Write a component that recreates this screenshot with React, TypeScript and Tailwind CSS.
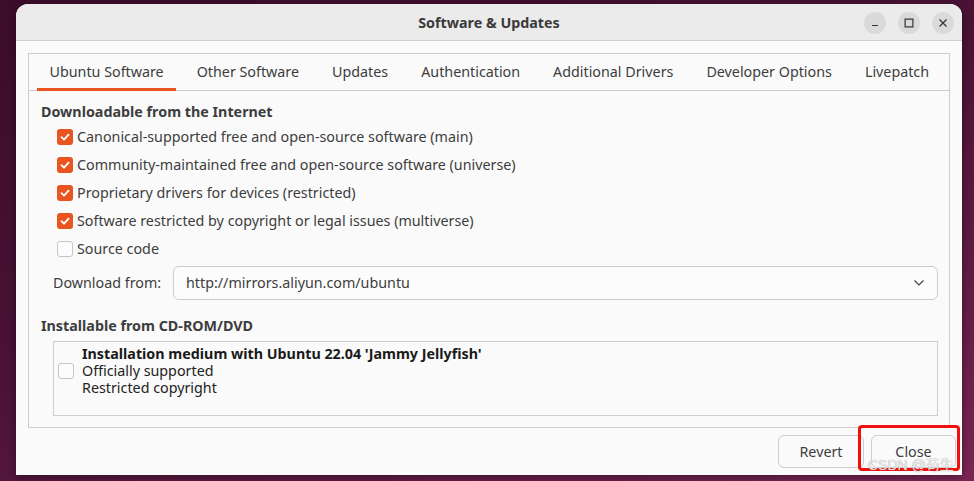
import React from "react";

const font = { fontFamily: '"Noto Sans", "Open Sans", sans-serif' };

function Check({ checked }: { checked: boolean }) {
  if (checked) {
    return (
      <div className="w-[16px] h-[16px] rounded-[3px] bg-[#e95420] flex items-center justify-center shrink-0">
        <svg width="12" height="12" viewBox="0 0 12 12">
          <path d="M2.5 6.2 L5 8.6 L9.6 3.6" stroke="white" strokeWidth="1.8" fill="none" strokeLinecap="round" strokeLinejoin="round" />
        </svg>
      </div>
    );
  }
  return <div className="w-[16px] h-[16px] rounded-[3px] border border-[#c6c6c6] bg-[#fcfcfc] shrink-0" />;
}

const tabs = [
  "Ubuntu Software",
  "Other Software",
  "Updates",
  "Authentication",
  "Additional Drivers",
  "Developer Options",
  "Livepatch",
];

const rows: [string, boolean][] = [
  ["Canonical-supported free and open-source software (main)", true],
  ["Community-maintained free and open-source software (universe)", true],
  ["Proprietary drivers for devices (restricted)", true],
  ["Software restricted by copyright or legal issues (multiverse)", true],
  ["Source code", false],
];

export default function App() {
  return (
    <div
      className="relative w-[974px] h-[481px] overflow-hidden bg-[linear-gradient(160deg,#3b0c2b_0%,#4a1236_45%,#5c1a42_70%,#7a2654_100%)] pt-[4px] pl-[16px] text-[#3d3d3d]"
      style={font}
    >
      <div className="w-[946px] h-[471px] rounded-t-[12px] bg-[#fafafa] flex flex-col overflow-hidden shadow-[0_2px_8px_rgba(0,0,0,0.4)]">
        {/* Header bar */}
        <div className="h-[37px] bg-[#ebebeb] border-b border-[#cfcfcf] grid grid-cols-[1fr_auto_1fr] items-center shrink-0">
          <div />
          <div className="text-[14.3px] font-bold text-[#3a3a3a] pt-[1px]">Software &amp; Updates</div>
          <div className="flex justify-end items-center gap-[12px] pr-[8px] pt-[2px]">
            <div className="w-[22px] h-[22px] rounded-full bg-[#dadada] flex items-center justify-center">
              <svg width="10" height="10" viewBox="0 0 10 10">
                <path d="M2 7.5 H8" stroke="#333" strokeWidth="1.2" />
              </svg>
            </div>
            <div className="w-[22px] h-[22px] rounded-full bg-[#dadada] flex items-center justify-center">
              <svg width="10" height="10" viewBox="0 0 10 10">
                <rect x="1.1" y="1.1" width="7.8" height="7.8" stroke="#333" strokeWidth="1.2" fill="none" />
              </svg>
            </div>
            <div className="w-[22px] h-[22px] rounded-full bg-[#dadada] flex items-center justify-center">
              <svg width="10" height="10" viewBox="0 0 10 10">
                <path d="M1.5 1.5 L8.5 8.5 M8.5 1.5 L1.5 8.5" stroke="#333" strokeWidth="1.2" />
              </svg>
            </div>
          </div>
        </div>

        {/* Body */}
        <div className="px-[12px] pt-[12px] flex flex-col">
          <div className="h-[375px] border border-[#cdcdcd] bg-[#fafafa] flex flex-col">
            {/* Tabs */}
            <div className="h-[37px] border-b border-[#cdcdcd] flex items-stretch pl-[4px] shrink-0">
              {tabs.map((t, i) => (
                <div
                  key={t}
                  className={
                    "mx-[4px] px-[12.5px] flex items-center text-[14.3px] border-b-[3px] mb-[-1px] " +
                    (i === 0 ? "border-[#e95420]" : "border-transparent")
                  }
                >
                  <span className="pt-[2px]">{t}</span>
                </div>
              ))}
            </div>

            {/* Content */}
            <div className="flex flex-col pl-[12px] pr-[11px] pt-[11px]">
              <div className="h-[20px] leading-[20px] font-bold text-[14.3px]">Downloadable from the Internet</div>
              <div className="flex flex-col pl-[16px] mt-[1px]">
                {rows.map(([label, c]) => (
                  <div key={label} className="h-[28px] flex items-center gap-[4px]">
                    <Check checked={c} />
                    <span className="text-[14.3px]">{label}</span>
                  </div>
                ))}
              </div>
              <div className="mt-[3px] pl-[12px] flex items-center h-[34px]">
                <div className="w-[120px] text-[14.3px]">Download from:</div>
                <div className="flex-1 h-[34px] rounded-[6px] border border-[#cdcdcd] bg-[#fcfcfc] flex items-center justify-between pl-[12px] pr-[12px]">
                  <span className="text-[14.3px]">http://mirrors.aliyun.com/ubuntu</span>
                  <svg width="12" height="8" viewBox="0 0 12 8">
                    <path d="M1.5 1.5 L6 6 L10.5 1.5" stroke="#444" strokeWidth="1.2" fill="none" />
                  </svg>
                </div>
              </div>
              <div className="mt-[16px] h-[20px] leading-[20px] font-bold text-[14.3px]">Installable from CD-ROM/DVD</div>
              <div className="mt-[5px] ml-[12px] h-[75px] border border-[#cdcdcd] bg-[#fafafa] flex items-start pl-[4px] pt-[3px]">
                <div className="flex items-center gap-[8px]">
                  <Check checked={false} />
                  <div className="flex flex-col text-[14.3px] leading-[17px]">
                    <span className="font-bold text-[#1a1a1a]">Installation medium with Ubuntu 22.04 'Jammy Jellyfish'</span>
                    <span className="text-[#222]">Officially supported</span>
                    <span className="text-[#222]">Restricted copyright</span>
                  </div>
                </div>
              </div>
            </div>
          </div>

          {/* Actions */}
          <div className="mt-[7px] flex justify-end gap-[7px] mr-[-6px]">
            <div className="w-[86px] h-[33px] rounded-[6px] border border-[#cdcdcd] bg-[#fafafa] flex items-center justify-center text-[14.3px]">
              Revert
            </div>
            <div className="w-[85px] h-[33px] rounded-[6px] border border-[#cdcdcd] bg-[#fafafa] flex items-center justify-center text-[14.3px]">
              Close
            </div>
          </div>
        </div>
      </div>

      {/* Red annotation box */}
      <div className="absolute left-[858px] top-[425px] w-[102px] h-[46px] border-[3px] border-[#f01010] rounded-[4px]" />
      {/* Watermark */}
      <div
        className="absolute left-[868px] top-[456px] text-[14px] leading-[18px] text-[rgba(255,255,255,0.8)] [text-shadow:0_0_1px_#888]"
        style={{ fontFamily: '"Liberation Sans", "Noto Sans CJK SC", sans-serif' }}
      >
        CSDN @苟生
      </div>
    </div>
  );
}
